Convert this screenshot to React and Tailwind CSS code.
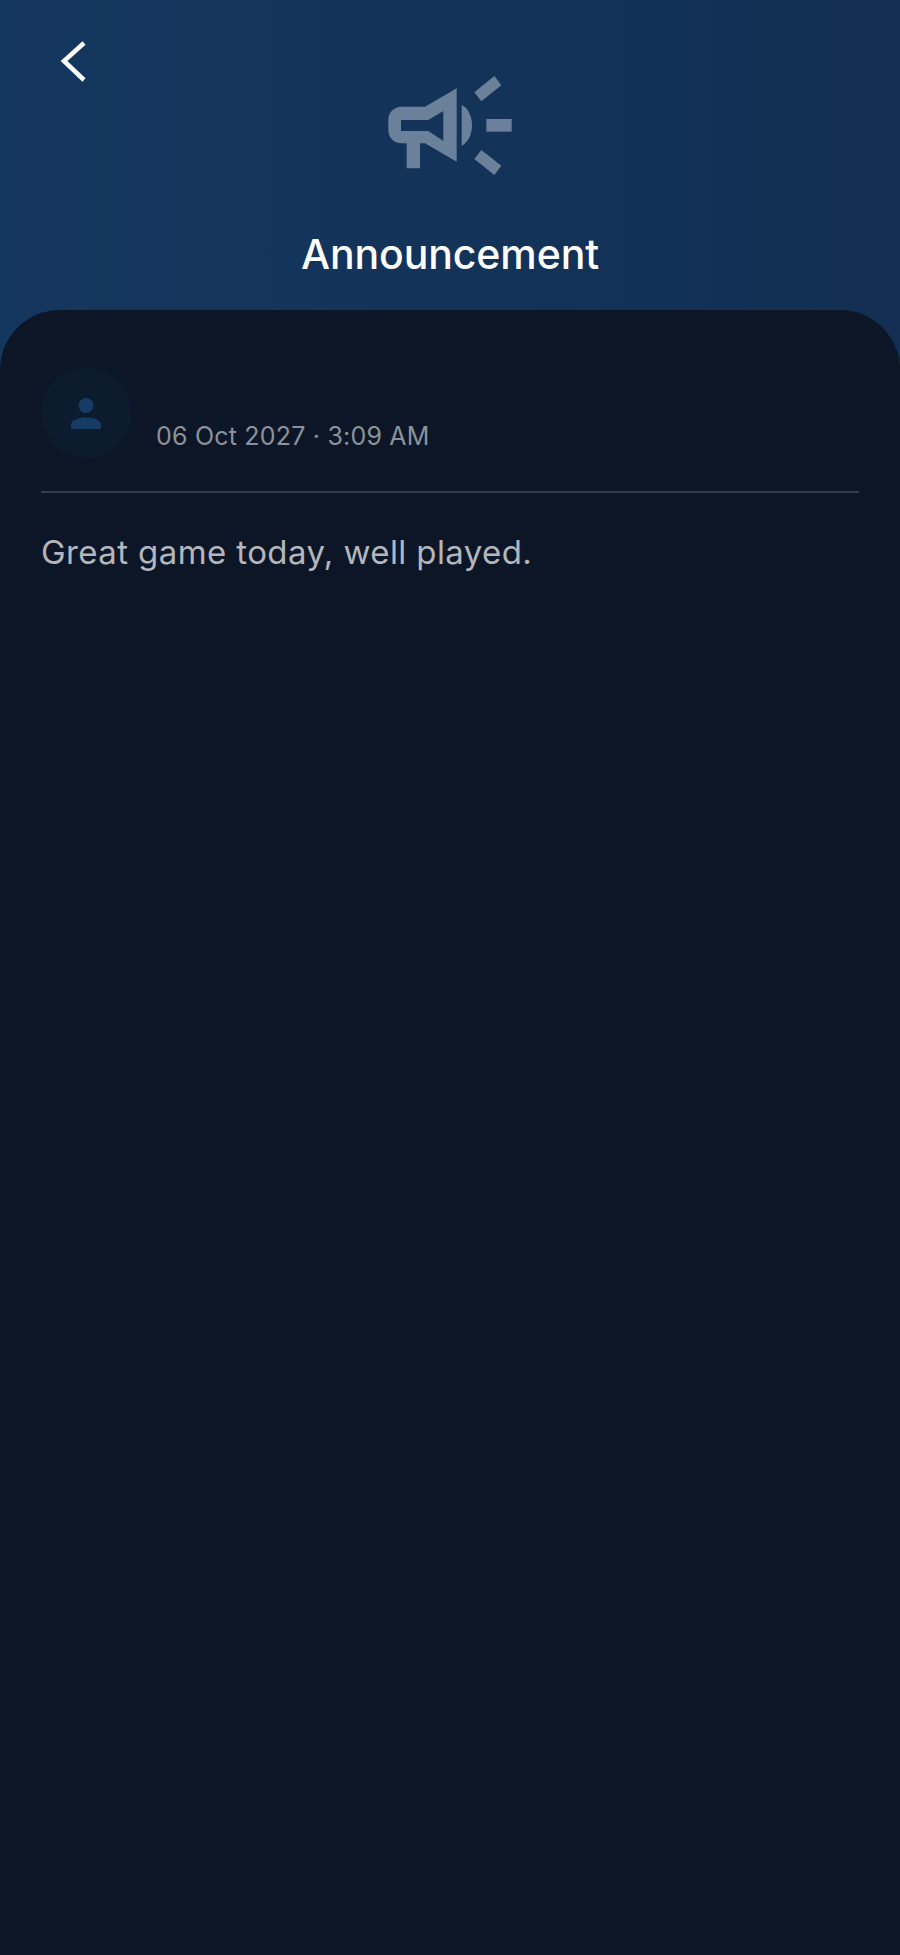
import React from 'react';

function MegaphoneIcon() {
  return (
    <svg className="w-[180px] h-[130px]" viewBox="0 0 540 390" fill="#6b819b">
      <path
        fillRule="evenodd"
        d="M125 140H195L290 85V305L195 250H180V325H140V250H125C102 250 85 233 85 210V180C85 157 102 140 125 140ZM123 180V213H205L250 243V153L205 180Z"
      />
      <path d="M305 135C325 145 336 170 336 196C336 222 325 247 305 258Z" />
      <path d="M343 97L403 48L424 76L364 124Z" />
      <path d="M379 177H455V215H379Z" />
      <path d="M364 270L424 317L403 345L343 297Z" />
    </svg>
  );
}

function PersonIcon() {
  return (
    <svg className="w-[30px] h-[31px]" viewBox="0 0 30 31" fill="#163c66">
      <circle cx="15" cy="7.5" r="7.5" />
      <path d="M0 29V27C0 22 7 19.5 15 19.5C23 19.5 30 22 30 27V29C30 30 29.5 31 28.5 31H1.5C0.5 31 0 30 0 29Z" />
    </svg>
  );
}

export default function App() {
  return (
    <div className="h-[1955px] flex flex-col bg-gradient-to-r from-[#14375f] to-[#122f53] font-['Inter',sans-serif]">
      {/* Header */}
      <div className="relative h-[310px] flex flex-col items-center pt-[60px]">
        <button className="absolute left-[58px] top-[38px] w-[32px] h-[48px]">
          <svg className="w-full h-full" viewBox="0 0 32 48" fill="none" stroke="#fff" strokeWidth="4.5">
            <polyline points="26,5 6,23 26,42" />
          </svg>
        </button>
        <MegaphoneIcon />
        <h1 className="mt-[40px] text-[41px] leading-[48px] font-[550] tracking-[-0.1px] text-white">Announcement</h1>
      </div>

      {/* Message panel */}
      <div className="flex-1 bg-[#0d1626] rounded-t-[60px] px-[41px] pt-[58px]">
        <div className="flex items-end gap-[25px] pb-[33px] border-b-2 border-[#343d4c]">
          <div className="w-[90px] h-[90px] rounded-full bg-[#0c1b2e] flex items-center justify-center">
            <PersonIcon />
          </div>
          <span className="text-[25px] leading-[30px] mb-[7px] tracking-[0.2px] text-[#8b929c]">06 Oct 2027 · 3:09 AM</span>
        </div>
        <p className="mt-[39px] text-[33px] leading-[40px] tracking-[0.4px] text-[#b3b7bd]">Great game today, well played.</p>
      </div>
    </div>
  );
}
